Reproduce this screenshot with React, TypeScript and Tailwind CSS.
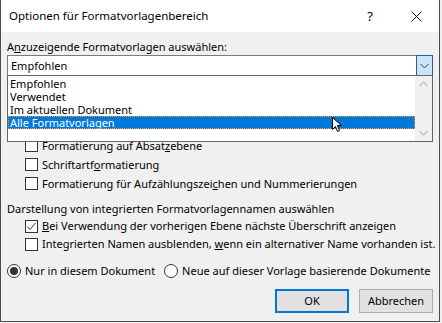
import React from 'react';

const font = "font-['Noto_Sans',sans-serif]";

function Box({ checked = false }: { checked?: boolean }) {
  return (
    <span className="w-[13px] h-[13px] border border-[#333333] bg-white flex items-center justify-center shrink-0">
      {checked && (
        <svg width="11" height="11" viewBox="0 0 11 11">
          <path d="M1.5 5.5 L4 8.5 L9.5 2" fill="none" stroke="#333333" strokeWidth="1" />
        </svg>
      )}
    </span>
  );
}

function Radio({ selected = false }: { selected?: boolean }) {
  return (
    <span className="w-[14px] h-[14px] rounded-full border border-[#333333] bg-white flex items-center justify-center shrink-0">
      {selected && <span className="w-[8px] h-[8px] rounded-full bg-[#333333]" />}
    </span>
  );
}

function CheckRow({ checked, h, children }: { checked?: boolean; h: string; children: React.ReactNode }) {
  return (
    <div className={`flex items-center gap-[4px] pl-[18px] ${h}`}>
      <Box checked={checked} />
      <span className="leading-[16px] whitespace-nowrap">{children}</span>
    </div>
  );
}

const items = ['Empfohlen', 'Verwendet', 'Im aktuellen Dokument', 'Alle Formatvorlagen'];

export default function App() {
  return (
    <div className={`w-[442px] h-[323px] bg-[#f0f0f0] text-[11px] text-black ${font}`}>
      <div className="relative w-[440px] h-[322px] border-l border-r border-b border-[#4d4d4d] bg-[#f0f0f0] flex flex-col">
        {/* title bar */}
        <div className="h-[32px] bg-white flex items-center pl-[8px] shrink-0">
          <span className="text-[11.5px] leading-[16px] whitespace-nowrap">Optionen für Formatvorlagenbereich</span>
          <span className="ml-auto w-[30px] text-center text-[13px] leading-[16px]">?</span>
          <span className="ml-[23px] mr-[15px] w-[16px] flex justify-center">
            <svg width="11" height="11" viewBox="0 0 11 11">
              <path d="M0.5 0.5 L10.5 10.5 M10.5 0.5 L0.5 10.5" stroke="#111" strokeWidth="1" />
            </svg>
          </span>
        </div>

        <div className="flex flex-col px-[6px]">
          <div className="mt-[7px] h-[16px] leading-[16px]">
            A<u>n</u>zuzeigende Formatvorlagen auswählen:
          </div>

          {/* combo */}
          <div className="h-[21px] border border-[#7a7a7a] bg-white flex items-center">
            <span className="pl-[3px] leading-[16px]">Empfohlen</span>
            <span className="ml-auto w-[17px] h-[21px] -mr-px border border-[#2b5d97] bg-[#cce4f7] flex items-center justify-center">
              <svg width="9" height="6" viewBox="0 0 9 6">
                <path d="M0.5 1 L4.5 5 L8.5 1" fill="none" stroke="#444" strokeWidth="1" />
              </svg>
            </span>
          </div>

          {/* hidden group behind list */}
          <div className="mt-[44px] h-[16px] leading-[16px]">
            Formatierung auswählen, die als Formatvorlagen angezeigt werden soll:
          </div>
          <CheckRow h="h-[19px]">
            Formatierung auf Absat<u>z</u>ebene
          </CheckRow>
          <CheckRow h="h-[19px]">
            Schriftartf<u>o</u>rmatierung
          </CheckRow>
          <CheckRow h="h-[19px]">
            Formatierung für Aufzählungszei<u>c</u>hen und Nummerierungen
          </CheckRow>

          <div className="mt-[8px] h-[16px] leading-[16px]">
            Darstellung von integrierten Formatvorlagennamen auswählen
          </div>
          <CheckRow checked h="h-[18px]">
            <u>B</u>ei Verwendung der vorherigen Ebene nächste Überschrift anzeigen
          </CheckRow>
          <CheckRow h="h-[18px]">
            Integrierten Namen ausblenden, <u>w</u>enn ein alternativer Name vorhanden ist.
          </CheckRow>

          <div className="mt-[9px] h-[18px] flex items-center">
            <Radio selected />
            <span className="ml-[4px] leading-[16px]">Nur in diesem Dokument</span>
            <span className="ml-[9px]">
              <Radio />
            </span>
            <span className="ml-[4px] leading-[16px] whitespace-nowrap">Neue auf dieser Vorlage basierende Dokumente</span>
          </div>

          <div className="mt-[9px] flex justify-end gap-[10px]">
            <button className="w-[74px] h-[24px] border-2 border-[#0078d7] bg-[#e1e1e1] leading-[16px]">OK</button>
            <button className="w-[74px] h-[24px] border border-[#adadad] bg-[#e1e1e1] leading-[16px]">Abbrechen</button>
          </div>
        </div>

        {/* dropdown list */}
        <div className="absolute left-[6px] top-[75px] w-[426px] h-[67px] border border-[#646464] bg-white flex">
          <div className="flex-1 flex flex-col pt-[1px]">
            {items.map((it, i) => (
              <div
                key={it}
                className={`h-[13px] leading-[13px] pl-[2px] whitespace-nowrap ${
                  i === 3 ? 'bg-[#0078d7] text-white outline outline-1 outline-dotted outline-[#f0a030] -outline-offset-1' : ''
                }`}
              >
                {it}
              </div>
            ))}
          </div>
          <div className="w-[17px] h-full bg-[#f0f0f0] flex flex-col items-center justify-between py-[5px]">
            <svg width="9" height="6" viewBox="0 0 9 6">
              <path d="M0.5 5 L4.5 1 L8.5 5" fill="none" stroke="#c2c2c2" strokeWidth="1.5" />
            </svg>
            <svg width="9" height="6" viewBox="0 0 9 6">
              <path d="M0.5 1 L4.5 5 L8.5 1" fill="none" stroke="#c2c2c2" strokeWidth="1.5" />
            </svg>
          </div>
        </div>

        {/* mouse pointer */}
        <svg className="absolute left-[331px] top-[117px]" width="13" height="17" viewBox="0 0 13 17">
          <path
            d="M0.5 0.5 L0.5 12.5 L3.5 9.5 L5.5 14.5 L7.5 13.5 L5.5 8.5 L9.5 8.5 Z"
            fill="white"
            stroke="black"
            strokeWidth="1"
            strokeLinejoin="miter"
          />
        </svg>
      </div>
    </div>
  );
}
